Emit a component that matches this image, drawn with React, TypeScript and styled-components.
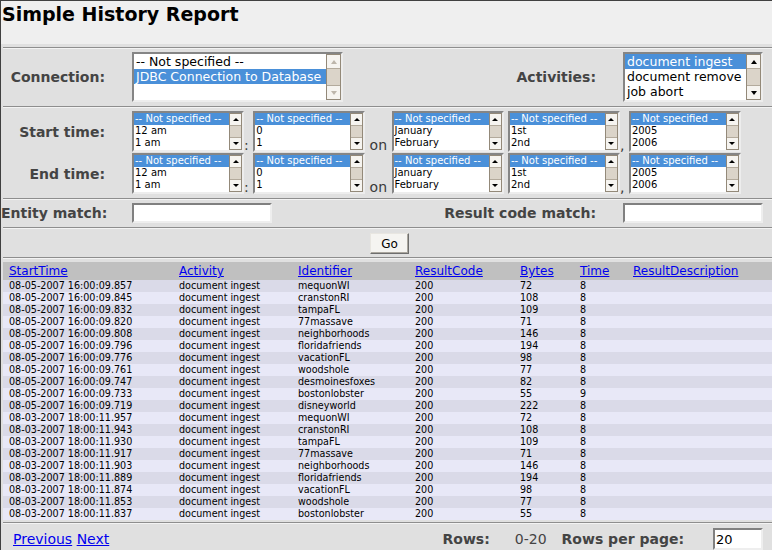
import React from 'react';
import styled, { createGlobalStyle } from 'styled-components';

const Global = createGlobalStyle`
  html, body { margin: 0; padding: 0; background: #ffffff; overflow: hidden; }
  body { font-family: "DejaVu Sans", Verdana, sans-serif; }
  #root { width: 772px; height: 550px; }
`;

const Page = styled.div`
  width: 772px;
  height: 550px;
  box-sizing: border-box;
  border-left: 1px solid #404040;
  border-top: 1px solid #404040;
  background: #e0e0e0;
  display: flex;
  flex-direction: column;
  overflow: hidden;
`;

const Title = styled.h1`
  margin: 0;
  height: 43px;
  flex: none;
  box-sizing: border-box;
  background: #efefef;
  padding: 2px 0 0 1px;
  font-size: 19px;
  line-height: 22px;
  font-weight: bold;
  color: #000;
`;

const Spacer = styled.div<{ $h: number }>`
  height: ${(p) => p.$h}px;
  flex: none;
`;

const Rule = styled.div`
  height: 1px;
  flex: none;
  margin-left: 2px;
  background: #8e8e8e;
  border-bottom: 1px solid #f3f3f3;
`;

const FormGrid = styled.div<{ $pt: number; $pb: number }>`
  display: grid;
  grid-template-columns: 104px 1fr auto 140px;
  column-gap: 27px;
  align-items: center;
  padding: ${(p) => p.$pt}px 9px ${(p) => p.$pb}px 0;
  flex: none;
`;

const TimeGrid = styled.div`
  display: grid;
  grid-template-columns: 104px 1fr;
  column-gap: 27px;
  row-gap: 1px;
  align-items: center;
  padding: 3px 0 4px 0;
  flex: none;
`;

const Label = styled.div`
  font-size: 14px;
  font-weight: bold;
  color: #444;
  text-align: right;
  white-space: nowrap;
`;

const TimeFields = styled.div`
  display: flex;
  align-items: flex-end;
`;

const Sep = styled.span`
  white-space: pre;
  font-size: 14px;
  line-height: 14px;
  color: #3a3a3a;
`;

const LBFrame = styled.div<{ $w: number; $small?: boolean }>`
  display: flex;
  width: ${(p) => p.$w}px;
  height: ${(p) => (p.$small ? 41 : 50)}px;
  box-sizing: border-box;
  border: 2px solid;
  border-color: #858585 #ededed #ededed #858585;
  background: #fff;
  flex: none;
`;

const LBOptions = styled.div`
  flex: 1;
  min-width: 0;
  overflow: hidden;
`;

const LBOption = styled.div<{ $small?: boolean; $sel?: boolean }>`
  height: ${(p) => (p.$small ? 12 : 15)}px;
  line-height: ${(p) => (p.$small ? 12 : 15)}px;
  font-size: ${(p) => (p.$small ? 10 : 12.5)}px;
  padding-left: ${(p) => (p.$small ? 1 : 2)}px;
  white-space: nowrap;
  background: ${(p) => (p.$sel ? '#4a90d9' : 'transparent')};
  color: ${(p) => (p.$sel ? '#ffffff' : '#000000')};
`;

const ScrollBar = styled.div<{ $small?: boolean }>`
  width: ${(p) => (p.$small ? 13 : 15)}px;
  box-sizing: border-box;
  display: flex;
  flex-direction: column;
  border: 1px solid #938979;
  background: #dbd4c9;
  flex: none;
`;

const ScrollBtn = styled.div<{ $small?: boolean; $top?: boolean }>`
  height: ${(p) => (p.$small ? 12 : 14)}px;
  box-sizing: border-box;
  flex: none;
  background: #f6f4f0;
  display: flex;
  align-items: center;
  justify-content: center;
  ${(p) => (p.$top ? 'border-bottom: 1px solid #b3aa9c;' : 'border-top: 1px solid #b3aa9c;')}
`;

const ScrollTrack = styled.div`
  flex: 1;
`;

const Arrow = styled.div<{ $up?: boolean; $off?: boolean; $small?: boolean }>`
  width: 0;
  height: 0;
  border-left: ${(p) => (p.$small ? 3 : 3.5)}px solid transparent;
  border-right: ${(p) => (p.$small ? 3 : 3.5)}px solid transparent;
  ${(p) =>
    p.$up
      ? `border-bottom: ${p.$small ? 3 : 4}px solid ${p.$off ? '#bdb6ab' : '#000'};`
      : `border-top: ${p.$small ? 3 : 4}px solid ${p.$off ? '#bdb6ab' : '#000'};`}
`;

type LBProps = {
  width: number;
  small?: boolean;
  items: string[];
  selected: number;
  disabled?: boolean;
};

function ListBox({ width, small, items, selected, disabled }: LBProps) {
  return (
    <LBFrame $w={width} $small={small}>
      <LBOptions>
        {items.map((t, i) => (
          <LBOption key={i} $small={small} $sel={i === selected}>
            {t}
          </LBOption>
        ))}
      </LBOptions>
      <ScrollBar $small={small}>
        <ScrollBtn $small={small} $top>
          <Arrow $up $off={disabled} $small={small} />
        </ScrollBtn>
        <ScrollTrack />
        <ScrollBtn $small={small}>
          <Arrow $off={disabled} $small={small} />
        </ScrollBtn>
      </ScrollBar>
    </LBFrame>
  );
}

const TextInput = styled.input<{ $w: number; $h: number }>`
  width: ${(p) => p.$w}px;
  height: ${(p) => p.$h}px;
  box-sizing: border-box;
  margin: 0;
  border: 2px solid;
  border-color: #808080 #eeeeee #eeeeee #808080;
  background: #fff;
  font-family: "DejaVu Sans", Verdana, sans-serif;
  font-size: 13px;
  padding: 0 0 0 1px;
  color: #000;
  outline: none;
`;

const GoRow = styled.div`
  display: flex;
  justify-content: center;
  padding: 4px 0 3px 6px;
  flex: none;
`;

const GoButton = styled.button`
  width: 39px;
  height: 21px;
  box-sizing: border-box;
  padding: 0;
  font-family: "DejaVu Sans", Verdana, sans-serif;
  font-size: 12px;
  color: #000;
  background: #f5f4f1;
  border: 1px solid;
  border-color: #e8e6e1 #6e6e6e #6e6e6e #e8e6e1;
  box-shadow: inset -1px -1px 0 #aaa69e;
`;

const Table = styled.div`
  margin-left: 2px;
  display: flex;
  flex-direction: column;
  flex: none;
`;

const cols = '170px 119px 117px 105px 60px 53px 1fr';

const HeadRow = styled.div`
  display: grid;
  grid-template-columns: ${cols};
  height: 18px;
  background: #c0c0c0;
`;

const HeadCell = styled.div`
  padding-left: 6px;
  font-size: 12px;
  line-height: 18px;
  white-space: nowrap;
`;

const Link = styled.a`
  color: #0000ee;
  text-decoration: underline;
  cursor: pointer;
`;

const DataRow = styled.div<{ $odd: boolean }>`
  display: grid;
  grid-template-columns: ${cols};
  height: 12px;
  background: ${(p) => (p.$odd ? '#dadae8' : '#e8e8f7')};
`;

const Cell = styled.div`
  padding-left: 6px;
  font-size: 9.6px;
  line-height: 11px;
  white-space: nowrap;
  color: #000;
  overflow: hidden;
`;

const Footer = styled.div`
  display: flex;
  align-items: center;
  padding: 4px 9px 0 12px;
  height: 26px;
  box-sizing: border-box;
  flex: none;
`;

const FooterLinks = styled.div`
  font-size: 14px;
  white-space: pre;
  flex: 1;
`;

const FooterLabel = styled.span<{ $ml: number }>`
  font-size: 14px;
  font-weight: bold;
  color: #444;
  margin-left: ${(p) => p.$ml}px;
  white-space: nowrap;
`;

const FooterValue = styled.span<{ $ml: number }>`
  font-size: 14px;
  color: #444;
  margin-left: ${(p) => p.$ml}px;
`;

const FooterInput = styled(TextInput)`
  margin-left: 29px;
  align-self: flex-start;
`;

const rows: [string, string, string, string, string, string][] = [
  ['08-05-2007 16:00:09.857', 'document ingest', 'mequonWI', '200', '72', '8'],
  ['08-05-2007 16:00:09.845', 'document ingest', 'cranstonRI', '200', '108', '8'],
  ['08-05-2007 16:00:09.832', 'document ingest', 'tampaFL', '200', '109', '8'],
  ['08-05-2007 16:00:09.820', 'document ingest', '77massave', '200', '71', '8'],
  ['08-05-2007 16:00:09.808', 'document ingest', 'neighborhoods', '200', '146', '8'],
  ['08-05-2007 16:00:09.796', 'document ingest', 'floridafriends', '200', '194', '8'],
  ['08-05-2007 16:00:09.776', 'document ingest', 'vacationFL', '200', '98', '8'],
  ['08-05-2007 16:00:09.761', 'document ingest', 'woodshole', '200', '77', '8'],
  ['08-05-2007 16:00:09.747', 'document ingest', 'desmoinesfoxes', '200', '82', '8'],
  ['08-05-2007 16:00:09.733', 'document ingest', 'bostonlobster', '200', '55', '9'],
  ['08-05-2007 16:00:09.719', 'document ingest', 'disneyworld', '200', '222', '8'],
  ['08-03-2007 18:00:11.957', 'document ingest', 'mequonWI', '200', '72', '8'],
  ['08-03-2007 18:00:11.943', 'document ingest', 'cranstonRI', '200', '108', '8'],
  ['08-03-2007 18:00:11.930', 'document ingest', 'tampaFL', '200', '109', '8'],
  ['08-03-2007 18:00:11.917', 'document ingest', '77massave', '200', '71', '8'],
  ['08-03-2007 18:00:11.903', 'document ingest', 'neighborhoods', '200', '146', '8'],
  ['08-03-2007 18:00:11.889', 'document ingest', 'floridafriends', '200', '194', '8'],
  ['08-03-2007 18:00:11.874', 'document ingest', 'vacationFL', '200', '98', '8'],
  ['08-03-2007 18:00:11.853', 'document ingest', 'woodshole', '200', '77', '8'],
  ['08-03-2007 18:00:11.837', 'document ingest', 'bostonlobster', '200', '55', '8'],
];

const NS = '-- Not specified --';

function TimeRow() {
  return (
    <TimeFields>
      <ListBox small width={112} items={[NS, '12 am', '1 am']} selected={0} />
      <Sep>{': '}</Sep>
      <ListBox small width={112} items={[NS, '0', '1']} selected={0} />
      <Sep>{' on '}</Sep>
      <ListBox small width={112} items={[NS, 'January', 'February']} selected={0} />
      <Sep>{' '}</Sep>
      <ListBox small width={112} items={[NS, '1st', '2nd']} selected={0} />
      <Sep>{', '}</Sep>
      <ListBox small width={112} items={[NS, '2005', '2006']} selected={0} />
    </TimeFields>
  );
}

export default function App() {
  return (
    <>
      <Global />
      <Page>
        <Title>Simple History Report</Title>
        <Spacer $h={3} />
        <Rule />
        <FormGrid $pt={3} $pb={4}>
          <Label>Connection:</Label>
          <ListBox
            width={211}
            items={[NS, 'JDBC Connection to Database', '']}
            selected={1}
            disabled
          />
          <Label>Activities:</Label>
          <ListBox
            width={140}
            items={['document ingest', 'document remove', 'job abort']}
            selected={0}
          />
        </FormGrid>
        <Rule />
        <TimeGrid>
          <Label>Start time:</Label>
          <TimeRow />
          <Label>End time:</Label>
          <TimeRow />
        </TimeGrid>
        <Rule />
        <FormGrid $pt={3} $pb={4}>
          <Label>Entity match:</Label>
          <TextInput $w={140} $h={20} defaultValue="" />
          <Label>Result code match:</Label>
          <TextInput $w={140} $h={20} defaultValue="" />
        </FormGrid>
        <Rule />
        <GoRow>
          <GoButton>Go</GoButton>
        </GoRow>
        <Rule />
        <Spacer $h={3} />
        <Table>
          <HeadRow>
            {['StartTime', 'Activity', 'Identifier', 'ResultCode', 'Bytes', 'Time', 'ResultDescription'].map((h) => (
              <HeadCell key={h}>
                <Link>{h}</Link>
              </HeadCell>
            ))}
          </HeadRow>
          {rows.map((r, i) => (
            <DataRow key={i} $odd={i % 2 === 0}>
              {r.map((c, j) => (
                <Cell key={j}>{c}</Cell>
              ))}
              <Cell />
            </DataRow>
          ))}
        </Table>
        <Spacer $h={2} />
        <Rule />
        <Footer>
          <FooterLinks>
            <Link>Previous</Link>
            {' '}
            <Link>Next</Link>
          </FooterLinks>
          <FooterLabel $ml={0}>Rows:</FooterLabel>
          <FooterValue $ml={25}>0-20</FooterValue>
          <FooterLabel $ml={15}>Rows per page:</FooterLabel>
          <FooterInput $w={50} $h={22} defaultValue="20" />
        </Footer>
      </Page>
    </>
  );
}
